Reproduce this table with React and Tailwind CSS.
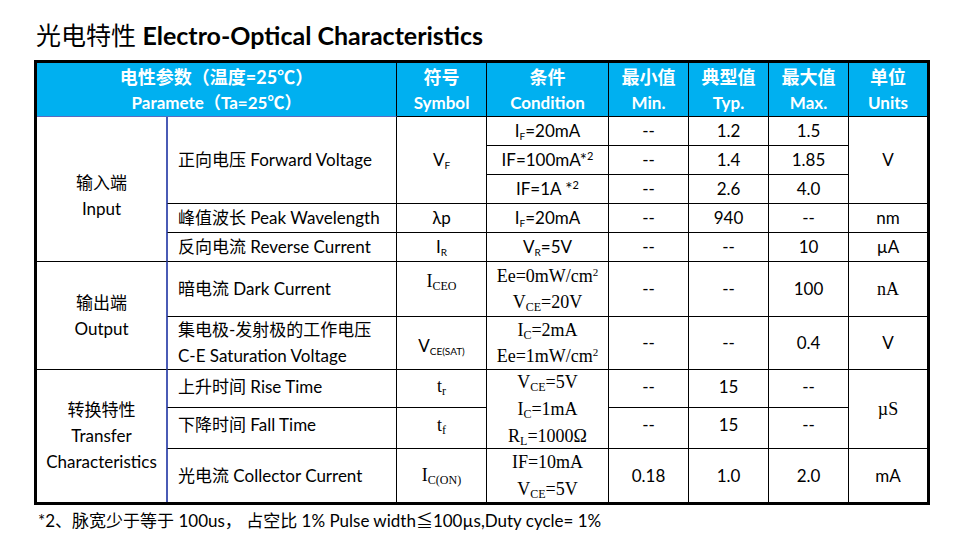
const sans = "font-['Lato','Noto_Sans_CJK_SC',sans-serif]";
const serif = "font-['Liberation_Serif','Noto_Serif_CJK_SC',serif]";

function Cell({ className = '', children }) {
  return (
    <div className={`border-r border-b border-black flex flex-col items-center justify-center text-center ${className}`}>
      {children}
    </div>
  );
}

function Head({ cn, en, className = '' }) {
  return (
    <Cell className={`bg-[#00b0f0] text-white font-bold leading-[26px] ${className}`}>
      <span className="text-[18px]">{cn}</span>
      <span className="text-[17px]">{en}</span>
    </Cell>
  );
}

function Sub({ children }) {
  return <sub className="text-[10px] align-baseline relative top-[3px]">{children}</sub>;
}

function SerifSub({ children }) {
  return <sub className="text-[12px] align-baseline relative top-[3px]">{children}</sub>;
}

function Sup({ children }) {
  return <sup className="text-[11px] align-baseline relative -top-[6px]">{children}</sup>;
}

const grp = 'border-r-[#4a5bb5] leading-[26px]';
const name = 'items-start text-left pl-[10px] border-l border-l-[#4a5bb5]';

export default function App() {
  return (
    <div className={`w-[962px] h-[552px] bg-white px-[34px] pt-[20px] text-black ${sans}`}>
      <h1 className="text-[25px] leading-[30px] pl-[2px] mb-[10px]">
        <span className="font-normal">光电特性 </span>
        <span className="font-bold">Electro-Optical Characteristics</span>
      </h1>

      <div className="grid grid-cols-[130px_230px_90px_122px_80px_80px_80px_78px] grid-rows-[54px_29px_29px_29px_29px_29px_55px_53px_38px_41px_53px] border-[3px] border-black text-[17px] w-[896px]">
        <Head className="col-span-2 border-b-[#5a6bc0]" cn="电性参数（温度=25℃）" en="Paramete（Ta=25℃）" />
        <Head cn="符号" en="Symbol" />
        <Head cn="条件" en="Condition" />
        <Head cn="最小值" en="Min." />
        <Head cn="典型值" en="Typ." />
        <Head cn="最大值" en="Max." />
        <Head className="border-r-0" cn="单位" en="Units" />

        {/* 输入端 */}
        <Cell className={`row-span-5 pt-[14px] ${grp}`}>
          <span>输入端</span>
          <span>Input</span>
        </Cell>
        <Cell className={`row-span-3 ${name}`}>正向电压 Forward Voltage</Cell>
        <Cell className="row-span-3"><span>V<Sub>F</Sub></span></Cell>
        <Cell><span>I<Sub>F</Sub>=20mA</span></Cell>
        <Cell>--</Cell>
        <Cell>1.2</Cell>
        <Cell>1.5</Cell>
        <Cell className="row-span-3 border-r-0">V</Cell>

        <Cell><span>IF=100mA*<Sup>2</Sup></span></Cell>
        <Cell>--</Cell>
        <Cell>1.4</Cell>
        <Cell>1.85</Cell>

        <Cell><span>IF=1A *<Sup>2</Sup></span></Cell>
        <Cell>--</Cell>
        <Cell>2.6</Cell>
        <Cell>4.0</Cell>

        <Cell className={name}>峰值波长 Peak Wavelength</Cell>
        <Cell>λp</Cell>
        <Cell><span>I<Sub>F</Sub>=20mA</span></Cell>
        <Cell>--</Cell>
        <Cell>940</Cell>
        <Cell>--</Cell>
        <Cell className="border-r-0">nm</Cell>

        <Cell className={name}>反向电流 Reverse Current</Cell>
        <Cell><span>I<Sub>R</Sub></span></Cell>
        <Cell><span>V<Sub>R</Sub>=5V</span></Cell>
        <Cell>--</Cell>
        <Cell>--</Cell>
        <Cell>10</Cell>
        <Cell className="border-r-0">µA</Cell>

        {/* 输出端 */}
        <Cell className={`row-span-2 ${grp}`}>
          <span>输出端</span>
          <span>Output</span>
        </Cell>
        <Cell className={name}>暗电流 Dark Current</Cell>
        <Cell className={`justify-start pt-[6px] text-[18px] ${serif}`}><span>I<SerifSub>CEO</SerifSub></span></Cell>
        <Cell className={`text-[18px] leading-[26px] ${serif}`}>
          <span>Ee=0mW/cm<Sup>2</Sup></span>
          <span>V<SerifSub>CE</SerifSub>=20V</span>
        </Cell>
        <Cell>--</Cell>
        <Cell>--</Cell>
        <Cell>100</Cell>
        <Cell className={`border-r-0 text-[18px] ${serif}`}>nA</Cell>

        <Cell className={`${name} leading-[26px]`}>
          <span>集电极-发射极的工作电压</span>
          <span>C-E Saturation Voltage</span>
        </Cell>
        <Cell className="pt-[6px]"><span>V<Sub>CE(SAT)</Sub></span></Cell>
        <Cell className={`text-[18px] leading-[26px] ${serif}`}>
          <span>I<SerifSub>C</SerifSub>=2mA</span>
          <span>Ee=1mW/cm<Sup>2</Sup></span>
        </Cell>
        <Cell>--</Cell>
        <Cell>--</Cell>
        <Cell>0.4</Cell>
        <Cell className="border-r-0">V</Cell>

        {/* 转换特性 */}
        <Cell className={`row-span-3 border-b-0 ${grp}`}>
          <span>转换特性</span>
          <span>Transfer</span>
          <span>Characteristics</span>
        </Cell>
        <Cell className={`${name} pb-[4px]`}>上升时间 Rise Time</Cell>
        <Cell className={`pb-[4px] text-[18px] ${serif}`}><span>t<SerifSub>r</SerifSub></span></Cell>
        <Cell className={`row-span-2 text-[18px] leading-[27px] ${serif}`}>
          <span>V<SerifSub>CE</SerifSub>=5V</span>
          <span>I<SerifSub>C</SerifSub>=1mA</span>
          <span>R<SerifSub>L</SerifSub>=1000Ω</span>
        </Cell>
        <Cell className="pb-[4px]">--</Cell>
        <Cell className="pb-[4px]">15</Cell>
        <Cell className="pb-[4px]">--</Cell>
        <Cell className={`row-span-2 border-r-0 text-[18px] ${serif}`}>µS</Cell>

        <Cell className={`${name} pb-[6px]`}>下降时间 Fall Time</Cell>
        <Cell className={`pb-[6px] text-[18px] ${serif}`}><span>t<SerifSub>f</SerifSub></span></Cell>
        <Cell className="pb-[6px]">--</Cell>
        <Cell className="pb-[6px]">15</Cell>
        <Cell className="pb-[6px]">--</Cell>

        <Cell className={`${name} border-b-0`}>光电流 Collector Current</Cell>
        <Cell className={`border-b-0 text-[18px] ${serif}`}><span>I<SerifSub>C(ON)</SerifSub></span></Cell>
        <Cell className={`border-b-0 text-[18px] leading-[27px] ${serif}`}>
          <span>IF=10mA</span>
          <span>V<SerifSub>CE</SerifSub>=5V</span>
        </Cell>
        <Cell className="border-b-0">0.18</Cell>
        <Cell className="border-b-0">1.0</Cell>
        <Cell className="border-b-0">2.0</Cell>
        <Cell className="border-b-0 border-r-0">mA</Cell>
      </div>

      <p className="text-[17px] leading-[28px] pl-[4px] pt-[2px]">
        *2、脉宽少于等于 100us， 占空比 1% Pulse width≦100µs,Duty cycle= 1%
      </p>
    </div>
  );
}
